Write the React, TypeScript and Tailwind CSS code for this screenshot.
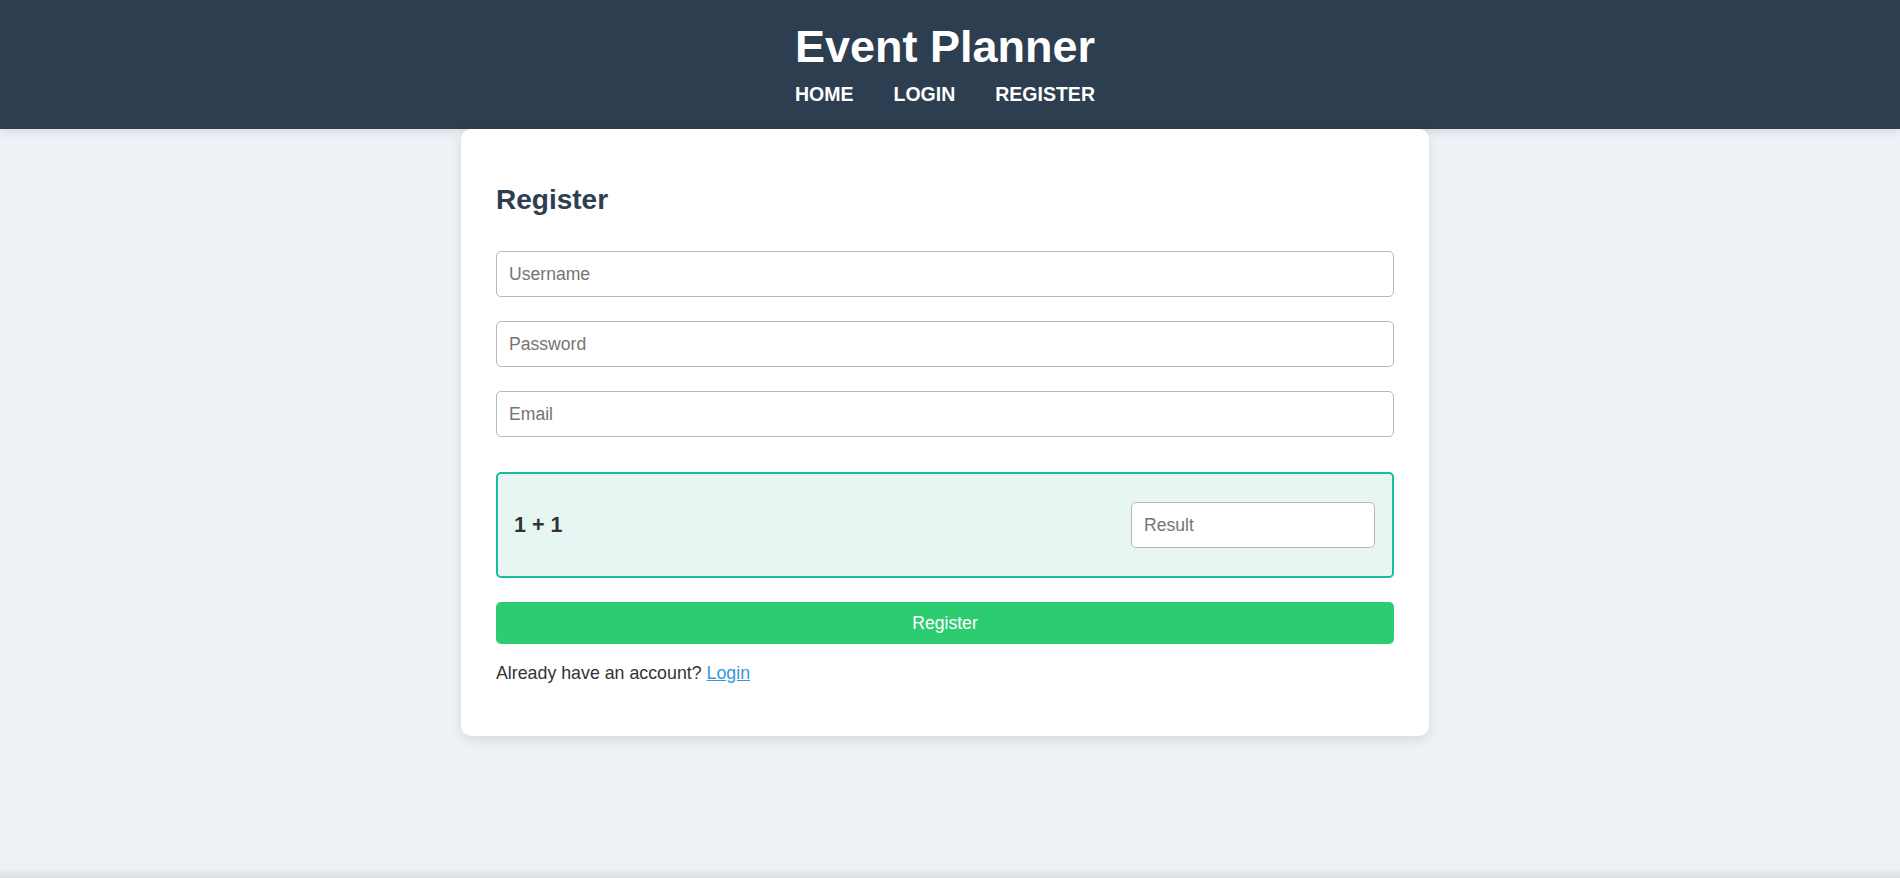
import React from "react";

export default function App() {
  return (
    <div
      className="h-[878px] flex flex-col bg-[#eef2f7] overflow-hidden"
      style={{ fontFamily: '"Liberation Sans", Arial, sans-serif' }}
    >
      <header className="h-[129px] shrink-0 bg-[#2c3e50] shadow-[0_2px_10px_rgba(0,0,0,0.12)] flex flex-col items-center pr-[10px] pt-[22px] text-white">
        <h1 className="text-[45px] leading-[50px] font-bold">Event Planner</h1>
        <nav className="mt-[10px] flex gap-[40px] text-[19.5px] leading-[24px] font-bold">
          <a>HOME</a>
          <a>LOGIN</a>
          <a>REGISTER</a>
        </nav>
      </header>

      <main className="flex-1 flex justify-center pr-[10px]">
        <div className="relative z-10 w-[968px] self-start bg-white rounded-[10px] shadow-[0_4px_12px_rgba(0,0,0,0.1)] px-[35px] pt-[36px] pb-[51px]">
          <h2 className="mt-[18px] text-[28px] leading-[34px] font-bold text-[#2c3e50]">Register</h2>

          <div className="mt-[34px] flex flex-col gap-[24px]">
            <input
              placeholder="Username"
              className="h-[46px] w-full rounded-[5px] border border-[#b8b8b8] px-[12px] text-[17.6px] text-[#333] placeholder:text-[#757575] outline-none"
            />
            <input
              placeholder="Password"
              type="password"
              className="h-[46px] w-full rounded-[5px] border border-[#b8b8b8] px-[12px] text-[17.6px] text-[#333] placeholder:text-[#757575] outline-none"
            />
            <input
              placeholder="Email"
              className="h-[46px] w-full rounded-[5px] border border-[#b8b8b8] px-[12px] text-[17.6px] text-[#333] placeholder:text-[#757575] outline-none"
            />
          </div>

          <div className="mt-[35px] h-[106px] flex items-center justify-between rounded-[5px] border-2 border-[#1abc9c] bg-[#e8f6f3] pl-[16px] pr-[17px]">
            <span className="text-[21.5px] font-bold text-[#333]">1 + 1</span>
            <input
              placeholder="Result"
              className="h-[46px] w-[244px] rounded-[5px] border border-[#b8b8b8] bg-white px-[12px] text-[17.6px] text-[#333] placeholder:text-[#757575] outline-none"
            />
          </div>

          <button className="mt-[24px] h-[42px] w-full rounded-[5px] bg-[#2ecc71] text-white text-[17.6px]">
            Register
          </button>

          <p className="mt-[17px] text-[17.8px] leading-[24px] text-[#333]">
            Already have an account?{" "}
            <a className="text-[#3498db] underline">Login</a>
          </p>
        </div>
      </main>

      <div className="h-[10px] shrink-0 bg-linear-to-b from-[#eef2f7] to-[#dcdfe2]" />
    </div>
  );
}
